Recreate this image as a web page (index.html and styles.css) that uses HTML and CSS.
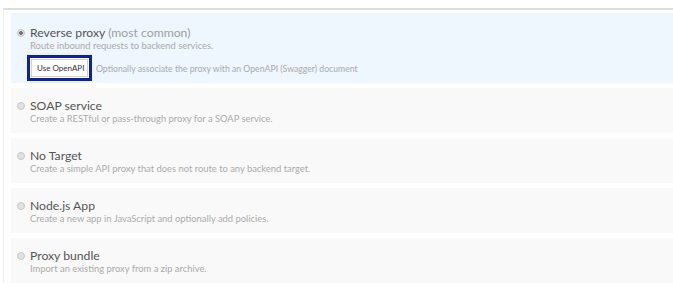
FILE: index.html
```html
<!DOCTYPE html>
<html lang="en">
<head>
    <meta charset="UTF-8">
    <title>New API Proxy</title>
    <link rel="stylesheet" href="styles.css">
</head>
<body>
    <div class="proxy-types">
        <div class="option selected">
            <span class="radio"></span>
            <div class="option-body">
                <div class="option-title">Reverse proxy <span class="hint">(most common)</span></div>
                <div class="option-desc">Route inbound requests to backend services.</div>
                <div class="openapi-row">
                    <span class="highlight"><button class="openapi-btn">Use OpenAPI</button></span>
                    <span class="openapi-desc">Optionally associate the proxy with an OpenAPI (Swagger) document</span>
                </div>
            </div>
        </div>

        <div class="option">
            <span class="radio"></span>
            <div class="option-body">
                <div class="option-title">SOAP service</div>
                <div class="option-desc">Create a RESTful or pass-through proxy for a SOAP service.</div>
            </div>
        </div>

        <div class="option">
            <span class="radio"></span>
            <div class="option-body">
                <div class="option-title">No Target</div>
                <div class="option-desc">Create a simple API proxy that does not route to any backend target.</div>
            </div>
        </div>

        <div class="option">
            <span class="radio"></span>
            <div class="option-body">
                <div class="option-title">Node.js App</div>
                <div class="option-desc">Create a new app in JavaScript and optionally add policies.</div>
            </div>
        </div>

        <div class="option">
            <span class="radio"></span>
            <div class="option-body">
                <div class="option-title">Proxy bundle</div>
                <div class="option-desc">Import an existing proxy from a zip archive.</div>
            </div>
        </div>
    </div>
</body>
</html>
```

FILE: styles.css
```css
body {
    margin: 0;
    font-family: Lato, "Open Sans", sans-serif;
    background-color: #fff;
    overflow: hidden;
}

.proxy-types {
    margin: 8px 0 0 3px;
    border-top: 2px solid #dedede;
    border-left: 1px solid #f0f0f0;
    padding: 3px 0 0 7px;
    display: flex;
    flex-direction: column;
    gap: 5px;
}

.option {
    display: flex;
    align-items: flex-start;
    background-color: #f9f9f9;
    padding: 10px 10px 7px 6px;
    height: 28px;
}

.option.selected {
    background-color: #eef6fe;
    padding-top: 12px;
    padding-bottom: 4px;
    height: 54px;
}

.radio {
    width: 6px;
    height: 6px;
    margin-top: 4px;
    margin-right: 5px;
    border: 1px solid #c8c8c8;
    border-radius: 50%;
    background-color: #e2e2e2;
    flex-shrink: 0;
}

.selected .radio {
    background: radial-gradient(circle, #777 0 1.6px, #e2e2e2 2.2px);
}

.option-title {
    font-size: 12.2px;
    line-height: 15px;
    color: #555;
}

.hint {
    color: #a0a0a0;
}

.option-desc {
    font-size: 9.4px;
    line-height: 12px;
    color: #ababab;
}

.openapi-row {
    display: flex;
    align-items: center;
    margin-top: 3px;
    margin-left: -3px;
}

.highlight {
    border: 3px solid #0a1fb4;
    padding: 1px;
    display: flex;
    background-color: #fff;
}

.openapi-btn {
    font-family: Lato, "Open Sans", sans-serif;
    font-size: 8px;
    color: #333;
    background-color: #fff;
    border: 1px solid #d4d4d4;
    padding: 0 5px;
    width: 57px;
    height: 18px;
    white-space: nowrap;
}

.openapi-desc {
    font-size: 8.7px;
    color: #ababab;
    margin-left: 4px;
}
```
